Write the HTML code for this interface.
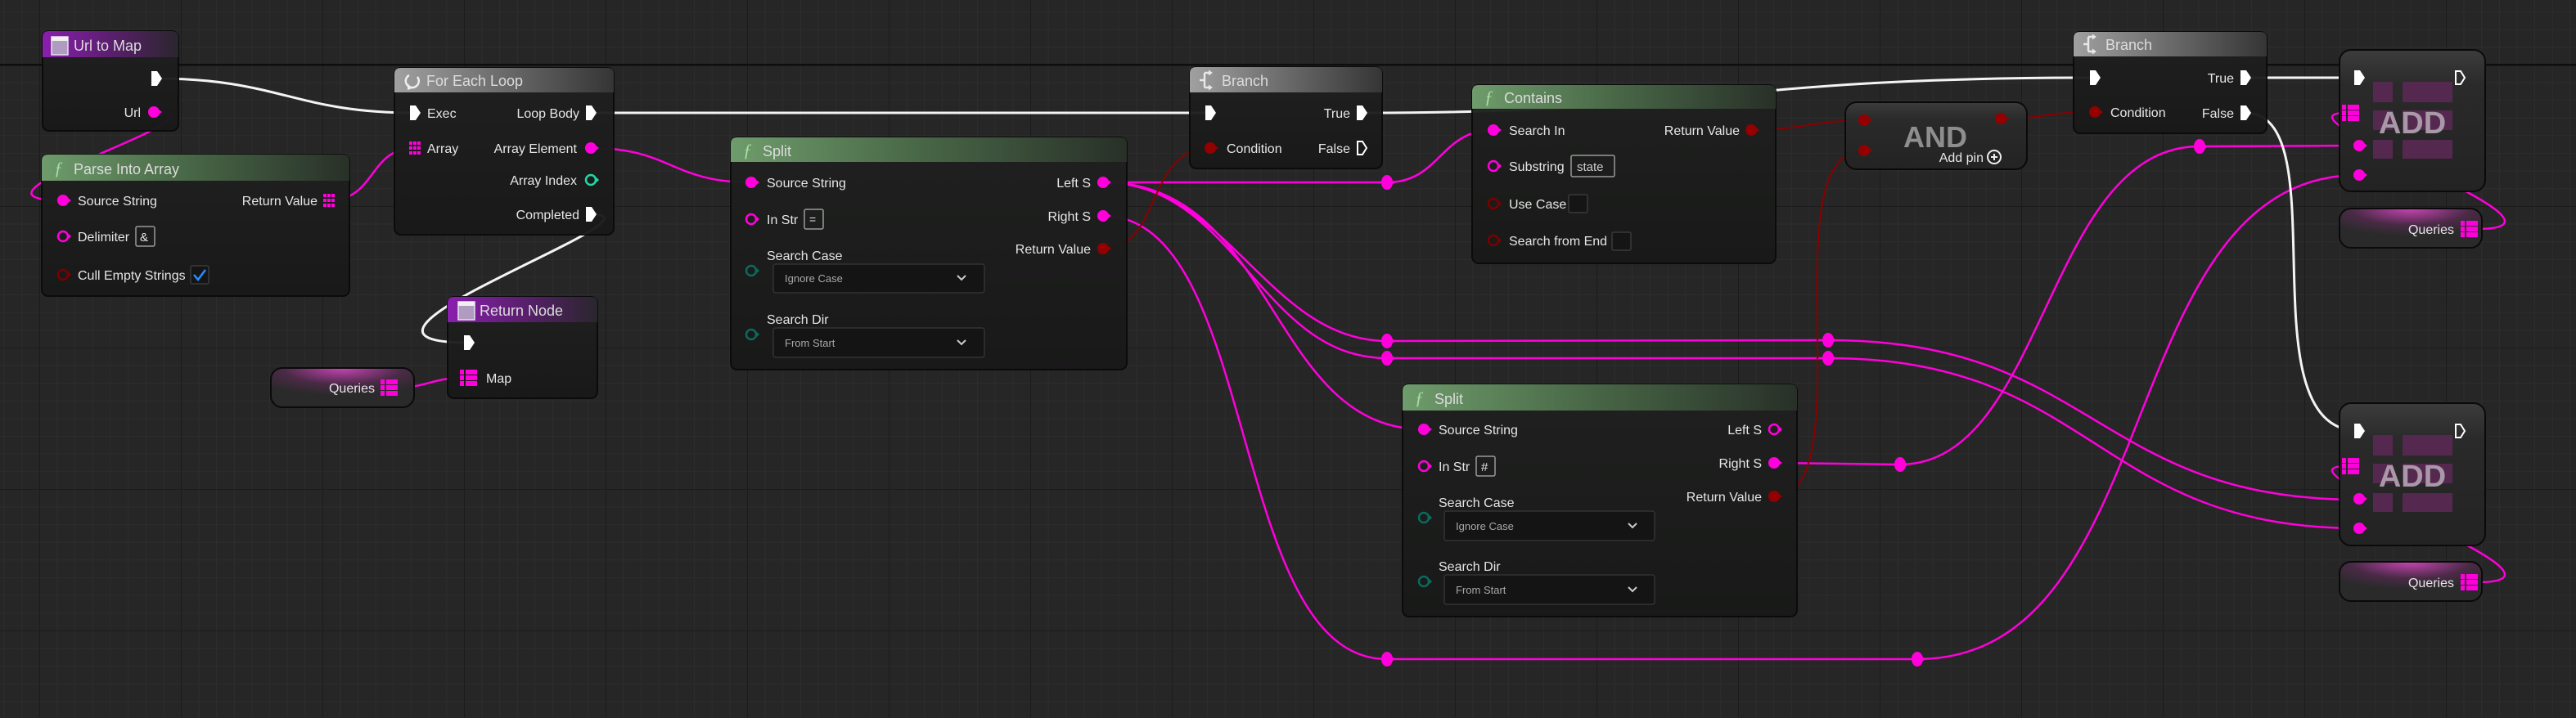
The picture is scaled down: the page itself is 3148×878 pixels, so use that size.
<!DOCTYPE html>
<html><head><meta charset="utf-8"><style>
html,body{margin:0;padding:0;background:#262626;overflow:hidden}
svg{display:block}
text{font-family:"Liberation Sans",sans-serif;fill:#e6e6e6;font-size:16px}
.h{font-size:18px;fill:#dcdcdc}
.r{text-anchor:end}
.dd{font-size:13px;fill:#a8a8a8}
</style></head><body>
<svg width="3148" height="878" viewBox="0 0 3148 878" xmlns="http://www.w3.org/2000/svg">
<defs>
<pattern id="minor" x="48" y="79" width="21.625" height="21.625" patternUnits="userSpaceOnUse"><path d="M0,0H21.625M0,0V21.625" stroke="#2f2f2f" stroke-width="1.5" fill="none"/></pattern>
<pattern id="major" x="48" y="79" width="173" height="173" patternUnits="userSpaceOnUse"><path d="M0,0H173M0,0V173" stroke="#1c1c1c" stroke-width="2" fill="none"/></pattern>
<linearGradient id="gGreen" x1="0" x2="1" y1="0" y2="0"><stop offset="0" stop-color="#6f9c6c"/><stop offset="0.45" stop-color="#4a6a48"/><stop offset="1" stop-color="#283028"/></linearGradient>
<linearGradient id="gPurple" x1="0" x2="1"><stop offset="0" stop-color="#8a1fae"/><stop offset="0.5" stop-color="#5a1f6e"/><stop offset="1" stop-color="#2a262c"/></linearGradient>
<linearGradient id="gGray" x1="0" x2="1"><stop offset="0" stop-color="#a0a0a0"/><stop offset="0.5" stop-color="#6a6a6a"/><stop offset="1" stop-color="#353535"/></linearGradient>
<linearGradient id="gBody" x1="0" x2="0" y1="0" y2="1"><stop offset="0" stop-color="#1f201f"/><stop offset="1" stop-color="#181918"/></linearGradient>
<linearGradient id="gCompact" x1="0" x2="0" y1="0" y2="1"><stop offset="0" stop-color="#3c3c3c"/><stop offset="0.25" stop-color="#2a2a2a"/><stop offset="1" stop-color="#232323"/></linearGradient>
<radialGradient id="gVar" cx="0.5" cy="0" r="0.7"><stop offset="0" stop-color="#c844b4"/><stop offset="0.6" stop-color="#4a2a46"/><stop offset="1" stop-color="#2a2a2a"/></radialGradient>
<g id="exec"><path d="M-6,-9H1L7,0L1,9H-6Z" fill="#fff"/></g>
<g id="execH"><path d="M-5,-8H1L6,0L1,8H-5Z" fill="none" stroke="#fff" stroke-width="2"/></g>
<g id="pin"><circle r="7" fill="#ff00dc"/><path d="M6,-3L10,0L6,3Z" fill="#ff00dc"/></g>
<g id="pinH"><circle r="6" fill="none" stroke="#ff00dc" stroke-width="2.5"/><path d="M7,-3L10,0L7,3Z" fill="#ff00dc"/></g>
<g id="bool"><circle r="7" fill="#940000"/><path d="M6,-3L10,0L6,3Z" fill="#940000"/></g>
<g id="boolH"><circle r="6" fill="none" stroke="#7a0000" stroke-width="2.5"/><path d="M7,-3L10,0L7,3Z" fill="#7a0000"/></g>
<g id="intH"><circle r="6" fill="none" stroke="#1fd8a8" stroke-width="2.5"/><path d="M7,-3L10,0L7,3Z" fill="#1fd8a8"/></g>
<g id="enumH"><circle r="6" fill="none" stroke="#0b6a5c" stroke-width="2.5"/><path d="M7,-3L10,0L7,3Z" fill="#0b6a5c"/></g>
<g id="arr" fill="#ff00dc"><rect x="-7" y="-8" width="4" height="4"/><rect x="-2" y="-8" width="4" height="4"/><rect x="3" y="-8" width="4" height="4"/><rect x="-7" y="-2" width="4" height="4"/><rect x="-2" y="-2" width="4" height="4"/><rect x="3" y="-2" width="4" height="4"/><rect x="-7" y="4" width="4" height="4"/><rect x="-2" y="4" width="4" height="4"/><rect x="3" y="4" width="4" height="4"/></g>
<g id="map" fill="#ff00dc"><rect x="-10" y="-10" width="5" height="6"/><rect x="-3" y="-10" width="14" height="6"/><rect x="-10" y="-3" width="5" height="6"/><rect x="-3" y="-3" width="14" height="6"/><rect x="-10" y="4" width="5" height="6"/><rect x="-3" y="4" width="14" height="6"/></g>
<g id="rr"><ellipse rx="7" ry="9" fill="#ff00dc"/><path d="M6,-3L10,0L6,3Z" fill="#ff00dc"/></g>
<g id="fn"><text x="0" y="0" style="font-family:'Liberation Serif',serif;font-style:italic;font-size:22px;fill:#a8e0a0">ƒ</text></g>
<g id="evIcon"><rect x="0" y="0" width="20" height="22" fill="#b09cc0" stroke="#e8e0f0" stroke-width="1.5"/><rect x="0" y="0" width="20" height="5" fill="#f0f0f0"/></g>
<g id="brIcon" fill="none" stroke="#e8e8e8" stroke-width="2.5"><path d="M0,11H6M6,2V20M6,2H12M6,20H12"/><path d="M11,-1L15,2L11,5M11,17L15,20L11,23" fill="#e8e8e8" stroke-width="1"/></g>
</defs>
<rect width="3148" height="878" fill="#262626"/>
<rect width="3148" height="878" fill="url(#minor)"/>
<rect width="3148" height="878" fill="url(#major)"/>
<rect x="0" y="78" width="3148" height="2.5" fill="#0e0e0e"/>

<g fill="none" stroke="#ff00dc" stroke-width="2.5">
<path d="M188,137 C300,137 -80,245 77,245"/>
<path d="M402,245 C460,245 450,181 507,181"/>
<path d="M722,181 C820,181 820,223 918,223"/>
<path d="M1348,223 L1695,223"/>
<path d="M1695,223 C1760,223 1760,159 1825,159"/>
<path d="M1348,223 C1500,223 1550,417 1695,417"/>
<path d="M1348,223 C1510,223 1540,438 1695,438"/>
<path d="M1348,223 C1560,223 1550,525 1740,525"/>
<path d="M1348,264 C1540,264 1500,806 1695,806"/>
<path d="M1695,417 L2234,416"/>
<path d="M1695,438 L2234,438"/>
<path d="M2234,416 C2560,416 2560,611 2883,611"/>
<path d="M2234,438 C2560,438 2560,646 2883,646"/>
<path d="M1695,806 L2343,806"/>
<path d="M2343,806 C2650,806 2580,214 2883,214"/>
<path d="M2168,566 L2322,568"/>
<path d="M2322,568 C2500,568 2500,179 2688,179"/>
<path d="M2688,179 L2883,178"/>
<path d="M486,474 C520,474 530,462 565,462"/>
<path d="M3027,280 C3180,280 2760,138 2868,138"/>
<path d="M3027,712 C3180,712 2760,570 2868,570"/>
</g>
<g fill="none" stroke="#8a0000" stroke-width="2">
<path d="M1348,304 C1420,304 1400,181 1479,181"/>
<path d="M2140,159 C2200,159 2220,147 2278,147"/>
<path d="M2168,607 C2280,607 2160,184 2278,184"/>
<path d="M2445,145 C2500,145 2500,137 2560,137"/>
</g>
<g fill="none" stroke="#f4f4f4" stroke-width="3">
<path d="M191,96 C340,96 360,138 507,138"/>
<path d="M722,138 L1479,138"/>
<path d="M722,262 C830,262 360,419 572,419"/>
<path d="M1664,138 C2100,138 2100,95 2560,95"/>
<path d="M2744,95 L2883,95"/>
<path d="M2744,138 C2860,138 2740,527 2883,527"/>
</g>

<use href="#rr" x="1695" y="223"/><use href="#rr" x="1695" y="417"/><use href="#rr" x="1695" y="438"/>
<use href="#rr" x="2234" y="416"/><use href="#rr" x="2234" y="438"/><use href="#rr" x="1695" y="806"/>
<use href="#rr" x="2343" y="806"/><use href="#rr" x="2322" y="568"/><use href="#rr" x="2688" y="179"/>

<g>
<rect x="52" y="38" width="166" height="122" rx="8" fill="url(#gBody)" stroke="#0a0a0a" stroke-width="2" opacity="0.96"/>
<path d="M52,70V46Q52,38 60,38H210Q218,38 218,46V70Z" fill="url(#gPurple)"/>
<use href="#evIcon" x="63" y="45"/>
<text class="h" x="90" y="62">Url to Map</text>
<use href="#exec" x="191" y="96"/>
<text class="r" x="172" y="143">Url</text>
<use href="#pin" x="188" y="137"/>
</g>

<g>
<rect x="51" y="189" width="376" height="173" rx="8" fill="url(#gBody)" stroke="#0a0a0a" stroke-width="2" opacity="0.96"/>
<path d="M51,221V197Q51,189 59,189H419Q427,189 427,197V221Z" fill="url(#gGreen)"/>
<use href="#fn" x="66" y="213"/>
<text class="h" x="90" y="213">Parse Into Array</text>
<use href="#pin" x="77" y="245"/><text x="95" y="251">Source String</text>
<text class="r" x="388" y="251">Return Value</text><use href="#arr" x="402" y="245"/>
<use href="#pinH" x="77" y="289"/><text x="95" y="295">Delimiter</text>
<rect x="166" y="277" width="23" height="24" fill="none" stroke="#9a9a9a" stroke-width="1.5" rx="2"/><text x="171" y="295" style="font-size:15px">&amp;</text>
<use href="#boolH" x="77" y="336"/><text x="95" y="342">Cull Empty Strings</text>
<rect x="233" y="325" width="22" height="22" fill="#151515" stroke="#3a3a3a" stroke-width="1.5" rx="2"/>
<path d="M237,336L242,342L251,330" fill="none" stroke="#2a8cff" stroke-width="2.5"/>
</g>

<g>
<rect x="482" y="83" width="268" height="204" rx="8" fill="url(#gBody)" stroke="#0a0a0a" stroke-width="2" opacity="0.96"/>
<path d="M482,113V91Q482,83 490,83H742Q750,83 750,91V113Z" fill="url(#gGray)"/>
<path d="M500,92 A8,8 0 1 0 510,94" fill="none" stroke="#eee" stroke-width="2.5"/><path d="M498,102L504,108L498,110Z" fill="#eee"/>
<text class="h" x="521" y="105">For Each Loop</text>
<use href="#exec" x="507" y="138"/><text x="522" y="144">Exec</text>
<text class="r" x="708" y="144">Loop Body</text><use href="#exec" x="722" y="138"/>
<use href="#arr" x="507" y="181"/><text x="522" y="187">Array</text>
<text class="r" x="705" y="187">Array Element</text><use href="#pin" x="722" y="181"/>
<text class="r" x="705" y="226">Array Index</text><use href="#intH" x="722" y="220"/>
<text class="r" x="708" y="268">Completed</text><use href="#exec" x="722" y="262"/>
</g>

<g>
<rect x="547" y="363" width="183" height="124" rx="8" fill="url(#gBody)" stroke="#0a0a0a" stroke-width="2" opacity="0.96"/>
<path d="M547,394V371Q547,363 555,363H722Q730,363 730,371V394Z" fill="url(#gPurple)"/>
<use href="#evIcon" x="560" y="369"/>
<text class="h" x="586" y="386">Return Node</text>
<use href="#exec" x="573" y="419"/>
<use href="#map" x="572" y="462"/><text x="594" y="468">Map</text>
</g>

<g>
<rect x="331" y="450" width="175" height="48" rx="14" fill="url(#gVar)" stroke="#0a0a0a" stroke-width="2"/>
<text class="r" x="458" y="480">Queries</text><use href="#map" x="475" y="474"/>
</g>

<g>
<rect x="893" y="168" width="484" height="284" rx="8" fill="url(#gBody)" stroke="#0a0a0a" stroke-width="2" opacity="0.96"/>
<path d="M893,198V176Q893,168 901,168H1369Q1377,168 1377,176V198Z" fill="url(#gGreen)"/>
<use href="#fn" x="908" y="191"/><text class="h" x="932" y="191">Split</text>
<use href="#pin" x="918" y="223"/><text x="937" y="229">Source String</text>
<use href="#pinH" x="918" y="268"/><text x="937" y="274">In Str</text>
<rect x="983" y="256" width="23" height="24" fill="none" stroke="#9a9a9a" stroke-width="1.5" rx="2"/><text x="989" y="273" style="font-size:14px">=</text>
<text x="937" y="318">Search Case</text><use href="#enumH" x="918" y="331"/>
<rect x="945" y="323" width="258" height="35" rx="3" fill="#141414" stroke="#333" stroke-width="1.5"/><text class="dd" x="959" y="345">Ignore Case</text>
<path d="M1170,337L1175,342L1180,337" fill="none" stroke="#ccc" stroke-width="2"/>
<text x="937" y="396">Search Dir</text><use href="#enumH" x="918" y="409"/>
<rect x="945" y="401" width="258" height="36" rx="3" fill="#141414" stroke="#333" stroke-width="1.5"/><text class="dd" x="959" y="424">From Start</text>
<path d="M1170,416L1175,421L1180,416" fill="none" stroke="#ccc" stroke-width="2"/>
<text class="r" x="1333" y="229">Left S</text><use href="#pin" x="1348" y="223"/>
<text class="r" x="1333" y="270">Right S</text><use href="#pin" x="1348" y="264"/>
<text class="r" x="1333" y="310">Return Value</text><use href="#bool" x="1348" y="304"/>
</g>

<g>
<rect x="1454" y="82" width="235" height="124" rx="8" fill="url(#gBody)" stroke="#0a0a0a" stroke-width="2" opacity="0.96"/>
<path d="M1454,113V90Q1454,82 1462,82H1681Q1689,82 1689,90V113Z" fill="url(#gGray)"/>
<use href="#brIcon" x="1466" y="87"/><text class="h" x="1493" y="105">Branch</text>
<use href="#exec" x="1479" y="138"/>
<text class="r" x="1650" y="144">True</text><use href="#exec" x="1664" y="138"/>
<use href="#bool" x="1479" y="181"/><text x="1499" y="187">Condition</text>
<text class="r" x="1650" y="187">False</text><use href="#execH" x="1664" y="181"/>
</g>

<g>
<rect x="1799" y="104" width="371" height="218" rx="8" fill="url(#gBody)" stroke="#0a0a0a" stroke-width="2" opacity="0.96"/>
<path d="M1799,133V112Q1799,104 1807,104H2162Q2170,104 2170,112V133Z" fill="url(#gGreen)"/>
<use href="#fn" x="1814" y="126"/><text class="h" x="1838" y="126">Contains</text>
<use href="#pin" x="1825" y="159"/><text x="1844" y="165">Search In</text>
<text class="r" x="2126" y="165">Return Value</text><use href="#bool" x="2140" y="159"/>
<use href="#pinH" x="1825" y="203"/><text x="1844" y="209">Substring</text>
<rect x="1920" y="190" width="53" height="26" fill="none" stroke="#9a9a9a" stroke-width="1.5" rx="2"/><text x="1927" y="209" style="font-size:15px;fill:#ccc">state</text>
<use href="#boolH" x="1825" y="249"/><text x="1844" y="255">Use Case</text>
<rect x="1917" y="238" width="23" height="22" fill="#151515" stroke="#3a3a3a" stroke-width="1.5" rx="2"/>
<use href="#boolH" x="1825" y="294"/><text x="1844" y="300">Search from End</text>
<rect x="1970" y="284" width="23" height="22" fill="#151515" stroke="#3a3a3a" stroke-width="1.5" rx="2"/>
</g>

<g>
<rect x="2255" y="125" width="222" height="82" rx="14" fill="url(#gCompact)" stroke="#0a0a0a" stroke-width="2"/>
<text x="2365" y="180" text-anchor="middle" style="font-size:36px;font-weight:bold;fill:#8e8e8e">AND</text>
<use href="#bool" x="2278" y="147"/><use href="#bool" x="2278" y="184"/><use href="#bool" x="2445" y="145"/>
<text class="r" x="2424" y="198">Add pin</text>
<circle cx="2437" cy="192" r="8" fill="none" stroke="#eee" stroke-width="2"/><path d="M2433,192H2441M2437,188V196" stroke="#eee" stroke-width="2"/>
</g>

<g>
<rect x="2534" y="39" width="236" height="124" rx="8" fill="url(#gBody)" stroke="#0a0a0a" stroke-width="2" opacity="0.96"/>
<path d="M2534,69V47Q2534,39 2542,39H2762Q2770,39 2770,47V69Z" fill="url(#gGray)"/>
<use href="#brIcon" x="2546" y="43"/><text class="h" x="2573" y="61">Branch</text>
<use href="#exec" x="2560" y="95"/>
<text class="r" x="2730" y="101">True</text><use href="#exec" x="2744" y="95"/>
<use href="#bool" x="2560" y="137"/><text x="2579" y="143">Condition</text>
<text class="r" x="2730" y="144">False</text><use href="#exec" x="2744" y="138"/>
</g>

<g>
<rect x="2859" y="61" width="178" height="173" rx="14" fill="url(#gCompact)" stroke="#0a0a0a" stroke-width="2"/>
<g fill="#55284f"><rect x="2900" y="100" width="24" height="25"/><rect x="2936" y="100" width="61" height="25"/><rect x="2900" y="135" width="24" height="24"/><rect x="2936" y="135" width="61" height="24"/><rect x="2900" y="171" width="24" height="23"/><rect x="2936" y="171" width="61" height="23"/></g>
<text x="2948" y="163" text-anchor="middle" style="font-size:38px;font-weight:bold;fill:#a898a8">ADD</text>
<use href="#exec" x="2883" y="95"/><use href="#execH" x="3006" y="95"/>
<use href="#map" x="2872" y="138"/><use href="#pin" x="2883" y="178"/><use href="#pin" x="2883" y="214"/>
</g>
<g>
<rect x="2859" y="255" width="174" height="48" rx="14" fill="url(#gVar)" stroke="#0a0a0a" stroke-width="2"/>
<text class="r" x="2999" y="286">Queries</text><use href="#map" x="3017" y="280"/>
</g>

<g>
<rect x="2859" y="493" width="178" height="174" rx="14" fill="url(#gCompact)" stroke="#0a0a0a" stroke-width="2"/>
<g fill="#55284f"><rect x="2900" y="532" width="24" height="25"/><rect x="2936" y="532" width="61" height="25"/><rect x="2900" y="567" width="24" height="24"/><rect x="2936" y="567" width="61" height="24"/><rect x="2900" y="603" width="24" height="23"/><rect x="2936" y="603" width="61" height="23"/></g>
<text x="2948" y="595" text-anchor="middle" style="font-size:38px;font-weight:bold;fill:#a898a8">ADD</text>
<use href="#exec" x="2883" y="527"/><use href="#execH" x="3006" y="527"/>
<use href="#map" x="2872" y="570"/><use href="#pin" x="2883" y="610"/><use href="#pin" x="2883" y="646"/>
</g>
<g>
<rect x="2859" y="687" width="174" height="48" rx="14" fill="url(#gVar)" stroke="#0a0a0a" stroke-width="2"/>
<text class="r" x="2999" y="718">Queries</text><use href="#map" x="3017" y="712"/>
</g>

<g>
<rect x="1714" y="470" width="482" height="284" rx="8" fill="url(#gBody)" stroke="#0a0a0a" stroke-width="2" opacity="0.96"/>
<path d="M1714,502V478Q1714,470 1722,470H2188Q2196,470 2196,478V502Z" fill="url(#gGreen)"/>
<use href="#fn" x="1729" y="494"/><text class="h" x="1753" y="494">Split</text>
<use href="#pin" x="1740" y="525"/><text x="1758" y="531">Source String</text>
<use href="#pinH" x="1740" y="570"/><text x="1758" y="576">In Str</text>
<rect x="1804" y="558" width="23" height="24" fill="none" stroke="#9a9a9a" stroke-width="1.5" rx="2"/><text x="1810" y="576" style="font-size:15px">#</text>
<text x="1758" y="620">Search Case</text><use href="#enumH" x="1740" y="633"/>
<rect x="1765" y="625" width="257" height="36" rx="3" fill="#141414" stroke="#333" stroke-width="1.5"/><text class="dd" x="1779" y="648">Ignore Case</text>
<path d="M1990,640L1995,645L2000,640" fill="none" stroke="#ccc" stroke-width="2"/>
<text x="1758" y="698">Search Dir</text><use href="#enumH" x="1740" y="711"/>
<rect x="1765" y="703" width="257" height="36" rx="3" fill="#141414" stroke="#333" stroke-width="1.5"/><text class="dd" x="1779" y="726">From Start</text>
<path d="M1990,718L1995,723L2000,718" fill="none" stroke="#ccc" stroke-width="2"/>
<text class="r" x="2153" y="531">Left S</text><use href="#pinH" x="2168" y="525"/>
<text class="r" x="2153" y="572">Right S</text><use href="#pin" x="2168" y="566"/>
<text class="r" x="2153" y="613">Return Value</text><use href="#bool" x="2168" y="607"/>
</g>
</svg>
</body></html>
